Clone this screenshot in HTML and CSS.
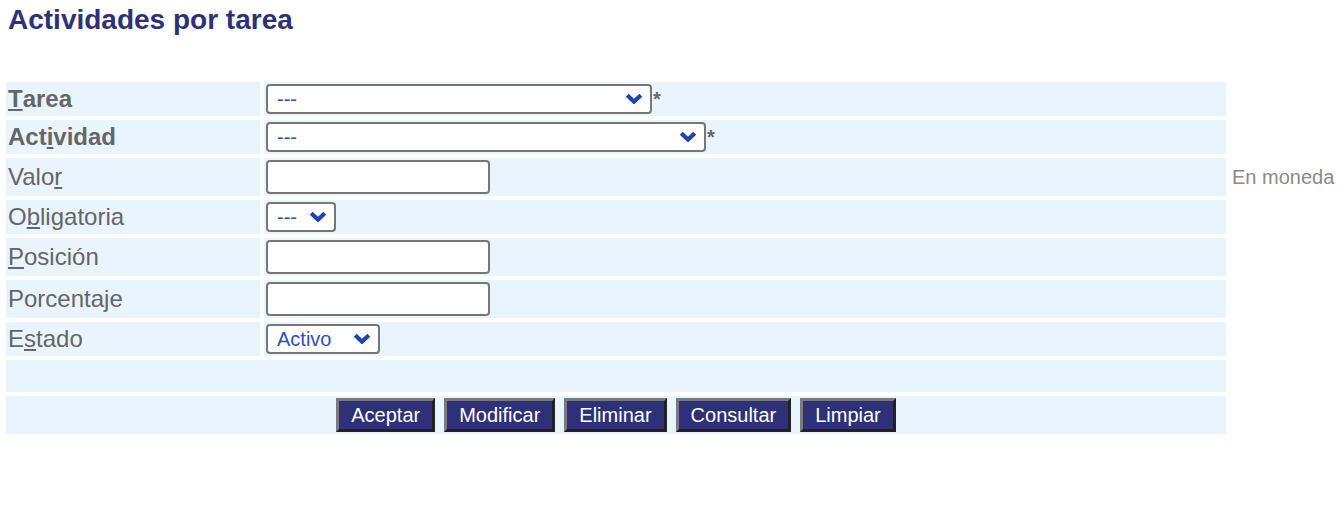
FILE: index.html
```html
<!DOCTYPE html>
<html lang="es">
<head>
<meta charset="utf-8">
<title>Actividades por tarea</title>
<link rel="stylesheet" href="styles.css">
</head>
<body>
<h1 class="title">Actividades por tarea</h1>
<form class="form">
  <div class="label bold"><u>T</u>area</div>
  <div class="field">
    <span class="sel sel-tarea">
      <select><option>---</option></select>
      <svg class="chev" viewBox="0 0 18 11" width="18" height="11"><polyline points="2.2,2.2 9,8.6 15.8,2.2"/></svg>
    </span><span class="req">*</span>
  </div>
  <div class="side"></div>

  <div class="label bold">Act<u>i</u>vidad</div>
  <div class="field">
    <span class="sel sel-actividad">
      <select><option>---</option></select>
      <svg class="chev" viewBox="0 0 18 11" width="18" height="11"><polyline points="2.2,2.2 9,8.6 15.8,2.2"/></svg>
    </span><span class="req">*</span>
  </div>
  <div class="side"></div>

  <div class="label">Valo<u>r</u></div>
  <div class="field"><input class="text" type="text"></div>
  <div class="side hint">En moneda</div>

  <div class="label">O<u>b</u>ligatoria</div>
  <div class="field">
    <span class="sel sel-oblig">
      <select><option>---</option></select>
      <svg class="chev" viewBox="0 0 18 11" width="18" height="11"><polyline points="2.2,2.2 9,8.6 15.8,2.2"/></svg>
    </span>
  </div>
  <div class="side"></div>

  <div class="label"><u>P</u>osición</div>
  <div class="field"><input class="text" type="text"></div>
  <div class="side"></div>

  <div class="label">Porcentaje</div>
  <div class="field"><input class="text" type="text"></div>
  <div class="side"></div>

  <div class="label">E<u>s</u>tado</div>
  <div class="field">
    <span class="sel sel-estado">
      <select><option>Activo</option></select>
      <svg class="chev" viewBox="0 0 18 11" width="18" height="11"><polyline points="2.2,2.2 9,8.6 15.8,2.2"/></svg>
    </span>
  </div>
  <div class="side"></div>

  <div class="wide"></div>
  <div class="side"></div>

  <div class="wide buttons">
    <button type="button" class="btn">Aceptar</button>
    <button type="button" class="btn">Modificar</button>
    <button type="button" class="btn">Eliminar</button>
    <button type="button" class="btn">Consultar</button>
    <button type="button" class="btn">Limpiar</button>
  </div>
  <div class="side"></div>
</form>
</body>
</html>
```

FILE: styles.css
```css
html, body {
  margin: 0;
  padding: 0;
  background: #ffffff;
}

body {
  font-family: "Liberation Sans", Arial, Helvetica, sans-serif;
  color: #666666;
}

.title {
  margin: 4px 0 46px 8px;
  font-size: 28px;
  line-height: 32px;
  font-weight: bold;
  color: #2e3177;
}

.form {
  display: grid;
  grid-template-columns: 254px 962px 1fr;
  grid-template-rows: 34px 34px 38px 34px 38px 38px 34px 32px 38px;
  column-gap: 4px;
  row-gap: 4px;
  margin-left: 6px;
}

.label {
  background: #eaf4fe;
  display: flex;
  align-items: center;
  padding: 0 2px;
  font-size: 24px;
  color: #666666;
  white-space: nowrap;
}

.label.bold {
  font-weight: bold;
}

.label u {
  text-decoration-thickness: 2px;
  text-underline-offset: 2px;
}

.field {
  background: #eaf4fe;
  padding: 2px;
  display: flex;
  align-items: baseline;
  font-size: 20px;
}

.side {
  display: flex;
  align-items: center;
  padding: 0 2px;
}

.hint {
  font-size: 20px;
  color: #8a8a8a;
  white-space: nowrap;
}

.wide {
  grid-column: 1 / 3;
  background: #eaf4fe;
}

.sel {
  position: relative;
  display: inline-block;
}

.sel select {
  -webkit-appearance: none;
  appearance: none;
  display: block;
  box-sizing: border-box;
  height: 30px;
  margin: 0;
  padding: 0 30px 0 9px;
  border: 2px solid #777777;
  border-radius: 4px;
  background: #ffffff;
  font-family: "Liberation Sans", Arial, Helvetica, sans-serif;
  font-size: 20px;
  color: #2f4fc2;
  outline: none;
}

.sel-tarea select { width: 386px; }
.sel-actividad select { width: 440px; }
.sel-oblig select { width: 70px; }
.sel-estado select { width: 114px; }

.chev {
  position: absolute;
  right: 9px;
  top: 9px;
  pointer-events: none;
}

.chev polyline {
  fill: none;
  stroke: #2243b3;
  stroke-width: 4.2;
  stroke-linecap: butt;
  stroke-linejoin: miter;
}

.req {
  font-size: 20px;
  font-weight: bold;
  color: #666666;
  margin-left: 1px;
}

.text {
  box-sizing: border-box;
  width: 224px;
  height: 34px;
  margin: 0;
  padding: 0 6px;
  border: 2px solid #777777;
  border-radius: 4px;
  background: #ffffff;
  font-family: "Liberation Sans", Arial, Helvetica, sans-serif;
  font-size: 20px;
  outline: none;
}

.buttons {
  display: flex;
  justify-content: center;
  align-items: center;
  gap: 9px;
}

.btn {
  box-sizing: border-box;
  height: 34px;
  margin: 0;
  padding: 0 12px;
  border-style: solid;
  border-width: 3px;
  border-color: #7a7a7a #222222 #222222 #7a7a7a;
  border-radius: 0;
  background: #2e3178;
  color: #ffffff;
  font-family: "Liberation Sans", Arial, Helvetica, sans-serif;
  font-size: 20px;
  line-height: 26px;
  cursor: pointer;
}
```
